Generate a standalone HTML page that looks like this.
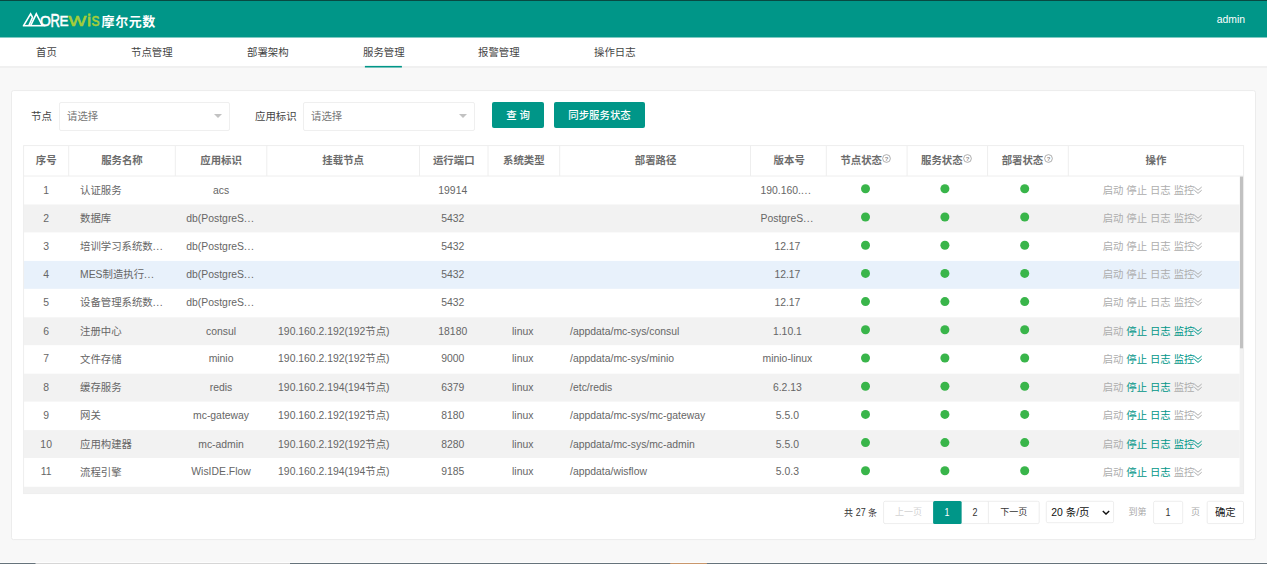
<!DOCTYPE html>
<html lang="zh-CN">
<head>
<meta charset="utf-8">
<title>服务管理</title>
<style>
*{box-sizing:border-box;margin:0;padding:0}
html,body{width:1267px;height:564px;overflow:hidden;background:#f8f8f8}
body{font-family:"Liberation Sans","Noto Sans CJK SC",sans-serif;font-size:10.4px;color:#555;position:relative}
.abs{position:absolute}
.bg{position:absolute;left:0;top:0}
#logo{left:22px;top:10px;overflow:visible}
#user{right:22px;top:13px;color:#fff;font-size:10.4px;line-height:14px}
#nav{left:0;top:37px;width:1267px;height:30px}
#nav span{position:absolute;top:1px;line-height:30px;font-size:10.4px;color:#444;white-space:nowrap}
.lbl{font-size:10.4px;color:#444;line-height:28px;top:103px;white-space:nowrap}
.sel{top:102px;height:29px;width:171px;border:1px solid #efefef;border-radius:2px;background:#fff;font-size:10.4px;color:#777;line-height:28px;padding-left:7px}
.sel:after{content:"";position:absolute;right:7px;top:11px;border:4px solid transparent;border-top:4px solid #c2c2c2}
.btn{top:102px;height:26px;background:#009688;color:#fff;font-size:10.4px;font-weight:500;line-height:27.5px;text-align:center;border-radius:2px}
.th{position:absolute;top:147px;height:28px;line-height:28px;font-weight:bold;color:#6c6c6c;text-align:center;white-space:nowrap}
.td{position:absolute;height:28px;line-height:28px;text-align:center;white-space:nowrap;color:#666}
.td.l{text-align:left}
.el{letter-spacing:0.58px}
.g{color:#adadad}
.t{color:#009688}
.q{vertical-align:middle;position:relative;top:-3px;margin-right:1.6px;margin-left:0.4px}
.cv{vertical-align:middle;position:relative;top:-0.8px;margin-left:-0.4px}
.pb{position:absolute;top:501px;height:23px;text-align:center;line-height:23px;font-size:9px;color:#333;white-space:nowrap}
.pb b,.pt b{font-weight:normal;font-size:10.4px;display:inline-block;transform:scaleX(0.86);margin:0 -0.8px}
.pb.psel{font-size:10.4px;color:#111;text-align:left;padding-left:5px}
.pb.psel svg{position:absolute;right:4px;top:9px}
.pt{top:501px;line-height:23px;font-size:9px;white-space:nowrap}
</style>
</head>
<body>
<svg class="bg" width="1267" height="564" viewBox="0 0 1267 564">
<rect x="0" y="0" width="1267" height="37.7" fill="#009688"/>
<rect x="0" y="0" width="1267" height="0.75" fill="#0b2f2b"/>
<rect x="0" y="37.7" width="1267" height="29" fill="#fff"/>
<rect x="0" y="66.5" width="1267" height="0.9" fill="#e4e4e4"/>
<rect x="364.9" y="65.9" width="37" height="1.6" fill="#009688"/>
<rect x="0" y="562" width="1267" height="1" fill="#fdfdfd"/>
<rect x="0" y="563" width="1267" height="1" fill="#66737b"/>
<rect x="35.5" y="563" width="254.5" height="1" fill="#d6d6d6"/>
<rect x="670.2" y="563" width="36.7" height="1" fill="#c9976c"/>
<rect x="11.5" y="90.6" width="1244" height="449" rx="2" fill="#fff" stroke="#ececec" stroke-width="1"/>
<rect x="24" y="204.50" width="1215.6" height="27.9" fill="#f2f2f2"/>
<rect x="24" y="260.90" width="1215.6" height="27.9" fill="#e8f1fb"/>
<rect x="24" y="317.30" width="1215.6" height="27.9" fill="#f2f2f2"/>
<rect x="24" y="373.70" width="1215.6" height="27.9" fill="#f2f2f2"/>
<rect x="24" y="430.10" width="1215.6" height="27.9" fill="#f2f2f2"/>
<circle cx="865.5" cy="188.80" r="4.5" fill="#39b54a"/>
<circle cx="944.9" cy="188.80" r="4.5" fill="#39b54a"/>
<circle cx="1024.7" cy="188.80" r="4.5" fill="#39b54a"/>
<circle cx="865.5" cy="217.00" r="4.5" fill="#39b54a"/>
<circle cx="944.9" cy="217.00" r="4.5" fill="#39b54a"/>
<circle cx="1024.7" cy="217.00" r="4.5" fill="#39b54a"/>
<circle cx="865.5" cy="245.20" r="4.5" fill="#39b54a"/>
<circle cx="944.9" cy="245.20" r="4.5" fill="#39b54a"/>
<circle cx="1024.7" cy="245.20" r="4.5" fill="#39b54a"/>
<circle cx="865.5" cy="273.40" r="4.5" fill="#39b54a"/>
<circle cx="944.9" cy="273.40" r="4.5" fill="#39b54a"/>
<circle cx="1024.7" cy="273.40" r="4.5" fill="#39b54a"/>
<circle cx="865.5" cy="301.60" r="4.5" fill="#39b54a"/>
<circle cx="944.9" cy="301.60" r="4.5" fill="#39b54a"/>
<circle cx="1024.7" cy="301.60" r="4.5" fill="#39b54a"/>
<circle cx="865.5" cy="329.80" r="4.5" fill="#39b54a"/>
<circle cx="944.9" cy="329.80" r="4.5" fill="#39b54a"/>
<circle cx="1024.7" cy="329.80" r="4.5" fill="#39b54a"/>
<circle cx="865.5" cy="358.00" r="4.5" fill="#39b54a"/>
<circle cx="944.9" cy="358.00" r="4.5" fill="#39b54a"/>
<circle cx="1024.7" cy="358.00" r="4.5" fill="#39b54a"/>
<circle cx="865.5" cy="386.20" r="4.5" fill="#39b54a"/>
<circle cx="944.9" cy="386.20" r="4.5" fill="#39b54a"/>
<circle cx="1024.7" cy="386.20" r="4.5" fill="#39b54a"/>
<circle cx="865.5" cy="414.40" r="4.5" fill="#39b54a"/>
<circle cx="944.9" cy="414.40" r="4.5" fill="#39b54a"/>
<circle cx="1024.7" cy="414.40" r="4.5" fill="#39b54a"/>
<circle cx="865.5" cy="442.60" r="4.5" fill="#39b54a"/>
<circle cx="944.9" cy="442.60" r="4.5" fill="#39b54a"/>
<circle cx="1024.7" cy="442.60" r="4.5" fill="#39b54a"/>
<circle cx="865.5" cy="470.80" r="4.5" fill="#39b54a"/>
<circle cx="944.9" cy="470.80" r="4.5" fill="#39b54a"/>
<circle cx="1024.7" cy="470.80" r="4.5" fill="#39b54a"/>
<rect x="1239.6" y="176.3" width="4" height="317.2" fill="#f1f1f1"/>
<rect x="1240" y="176.3" width="3.6" height="172" fill="#c1c1c1"/>
<rect x="24" y="486.8" width="1219.6" height="6.7" fill="#f1f1f1"/>
<g stroke="#e9e9e9" stroke-width="0.8" fill="#fff">
<rect x="883.6" y="501.3" width="155.6" height="22.3" rx="1.5"/>
<path d="M961.4 501.3 V523.6 M988.4 501.3 V523.6" fill="none"/>
<rect x="1046.3" y="501.3" width="67.3" height="21.4" rx="1.5"/>
<rect x="1153.6" y="501.3" width="29.1" height="22.3" rx="1.5"/>
<rect x="1207.2" y="501.3" width="36.3" height="22.3" rx="1.5"/>
</g>
<rect x="933.1" y="500.9" width="28.5" height="23.1" rx="1.5" fill="#009688"/>
<g stroke="#eeeeee" stroke-width="1" fill="none">
<rect x="23.6" y="145.6" width="1220" height="348"/>
<path d="M23.6 176 H1243.6"/>
<path d="M68.7 145.6 V176"/>
<path d="M175.3 145.6 V176"/>
<path d="M266.8 145.6 V176"/>
<path d="M419.5 145.6 V176"/>
<path d="M488.0 145.6 V176"/>
<path d="M559.7 145.6 V176"/>
<path d="M750.5 145.6 V176"/>
<path d="M826.3 145.6 V176"/>
<path d="M907.1 145.6 V176"/>
<path d="M987.6 145.6 V176"/>
<path d="M1068.3 145.6 V176"/>
</g></svg>
<div id="user" class="abs">admin</div>
<div id="nav" class="abs">
<span style="left:36px">首页</span>
<span style="left:131px">节点管理</span>
<span style="left:247px">部署架构</span>
<span style="left:363px">服务管理</span>
<span style="left:478px">报警管理</span>
<span style="left:594px">操作日志</span>
</div>
<div class="abs lbl" style="left:31px">节点</div>
<div class="abs sel" style="left:59px">请选择</div>
<div class="abs lbl" style="left:255px">应用标识</div>
<div class="abs sel" style="left:303px;width:172px">请选择</div>
<div class="abs btn" style="left:492px;width:52px">查 询</div>
<div class="abs btn" style="left:554px;width:91px">同步服务状态</div>
<div class="th" style="left:23.60px;width:45.10px">序号</div>
<div class="th" style="left:68.70px;width:106.60px">服务名称</div>
<div class="th" style="left:175.30px;width:91.50px">应用标识</div>
<div class="th" style="left:266.80px;width:152.70px">挂载节点</div>
<div class="th" style="left:419.50px;width:68.50px">运行端口</div>
<div class="th" style="left:488.00px;width:71.70px">系统类型</div>
<div class="th" style="left:560.20px;width:190.80px">部署路径</div>
<div class="th" style="left:751.30px;width:75.80px">版本号</div>
<div class="th" style="left:826.30px;width:80.80px">节点状态<svg class="q" viewBox="0 0 10 10" width="9" height="9"><circle cx="5" cy="5" r="4.3" fill="none" stroke="#888" stroke-width="0.75"/><text x="5" y="7.4" font-size="6.6" text-anchor="middle" fill="#888" font-family="Liberation Sans, sans-serif">?</text></svg></div>
<div class="th" style="left:907.10px;width:80.50px">服务状态<svg class="q" viewBox="0 0 10 10" width="9" height="9"><circle cx="5" cy="5" r="4.3" fill="none" stroke="#888" stroke-width="0.75"/><text x="5" y="7.4" font-size="6.6" text-anchor="middle" fill="#888" font-family="Liberation Sans, sans-serif">?</text></svg></div>
<div class="th" style="left:987.60px;width:80.70px">部署状态<svg class="q" viewBox="0 0 10 10" width="9" height="9"><circle cx="5" cy="5" r="4.3" fill="none" stroke="#888" stroke-width="0.75"/><text x="5" y="7.4" font-size="6.6" text-anchor="middle" fill="#888" font-family="Liberation Sans, sans-serif">?</text></svg></div>
<div class="th" style="left:1068.30px;width:175.30px">操作</div>
<div class="td" style="left:23.60px;top:177px;width:45.10px">1</div>
<div class="td l" style="left:80.00px;top:177px;width:95.60px">认证服务</div>
<div class="td" style="left:175.30px;top:177px;width:91.50px">acs</div>
<div class="td" style="left:418.50px;top:177px;width:68.50px">19914</div>
<div class="td l" style="left:760.50px;top:177px;width:64.80px">190.160.<span class="el">...</span></div>
<div class="td op" style="left:1066.70px;top:177px;width:171.30px"><span class="g">启动</span> <span class="g">停止</span> <span class="g">日志</span> <span class="g">监控<svg class="cv" viewBox="0 0 8 8" width="8" height="8"><path d="M0.3 1 L4 4.2 L7.7 1 M0.3 4.2 L4 7.4 L7.7 4.2" fill="none" stroke="currentColor" stroke-width="1"/></svg></span></div>
<div class="td" style="left:23.60px;top:205px;width:45.10px">2</div>
<div class="td l" style="left:80.00px;top:205px;width:95.60px">数据库</div>
<div class="td l" style="left:186.30px;top:205px;width:80.50px">db(PostgreS<span class="el">...</span></div>
<div class="td" style="left:418.50px;top:205px;width:68.50px">5432</div>
<div class="td l" style="left:760.50px;top:205px;width:64.80px">PostgreS<span class="el">...</span></div>
<div class="td op" style="left:1066.70px;top:205px;width:171.30px"><span class="g">启动</span> <span class="g">停止</span> <span class="g">日志</span> <span class="g">监控<svg class="cv" viewBox="0 0 8 8" width="8" height="8"><path d="M0.3 1 L4 4.2 L7.7 1 M0.3 4.2 L4 7.4 L7.7 4.2" fill="none" stroke="currentColor" stroke-width="1"/></svg></span></div>
<div class="td" style="left:23.60px;top:233px;width:45.10px">3</div>
<div class="td l" style="left:80.00px;top:233px;width:95.60px">培训学习系统数<span class="el">...</span></div>
<div class="td l" style="left:186.30px;top:233px;width:80.50px">db(PostgreS<span class="el">...</span></div>
<div class="td" style="left:418.50px;top:233px;width:68.50px">5432</div>
<div class="td" style="left:749.50px;top:233px;width:75.80px">12.17</div>
<div class="td op" style="left:1066.70px;top:233px;width:171.30px"><span class="g">启动</span> <span class="g">停止</span> <span class="g">日志</span> <span class="g">监控<svg class="cv" viewBox="0 0 8 8" width="8" height="8"><path d="M0.3 1 L4 4.2 L7.7 1 M0.3 4.2 L4 7.4 L7.7 4.2" fill="none" stroke="currentColor" stroke-width="1"/></svg></span></div>
<div class="td" style="left:23.60px;top:261px;width:45.10px">4</div>
<div class="td l" style="left:80.00px;top:261px;width:95.60px">MES制造执行<span class="el">...</span></div>
<div class="td l" style="left:186.30px;top:261px;width:80.50px">db(PostgreS<span class="el">...</span></div>
<div class="td" style="left:418.50px;top:261px;width:68.50px">5432</div>
<div class="td" style="left:749.50px;top:261px;width:75.80px">12.17</div>
<div class="td op" style="left:1066.70px;top:261px;width:171.30px"><span class="g">启动</span> <span class="g">停止</span> <span class="g">日志</span> <span class="g">监控<svg class="cv" viewBox="0 0 8 8" width="8" height="8"><path d="M0.3 1 L4 4.2 L7.7 1 M0.3 4.2 L4 7.4 L7.7 4.2" fill="none" stroke="currentColor" stroke-width="1"/></svg></span></div>
<div class="td" style="left:23.60px;top:289px;width:45.10px">5</div>
<div class="td l" style="left:80.00px;top:289px;width:95.60px">设备管理系统数<span class="el">...</span></div>
<div class="td l" style="left:186.30px;top:289px;width:80.50px">db(PostgreS<span class="el">...</span></div>
<div class="td" style="left:418.50px;top:289px;width:68.50px">5432</div>
<div class="td" style="left:749.50px;top:289px;width:75.80px">12.17</div>
<div class="td op" style="left:1066.70px;top:289px;width:171.30px"><span class="g">启动</span> <span class="g">停止</span> <span class="g">日志</span> <span class="g">监控<svg class="cv" viewBox="0 0 8 8" width="8" height="8"><path d="M0.3 1 L4 4.2 L7.7 1 M0.3 4.2 L4 7.4 L7.7 4.2" fill="none" stroke="currentColor" stroke-width="1"/></svg></span></div>
<div class="td" style="left:23.60px;top:318px;width:45.10px">6</div>
<div class="td l" style="left:80.00px;top:318px;width:95.60px">注册中心</div>
<div class="td" style="left:175.30px;top:318px;width:91.50px">consul</div>
<div class="td l" style="left:278.10px;top:318px;width:141.70px">190.160.2.192(192节点)</div>
<div class="td" style="left:418.50px;top:318px;width:68.50px">18180</div>
<div class="td" style="left:486.90px;top:318px;width:71.70px">linux</div>
<div class="td l" style="left:570.10px;top:318px;width:179.80px">/appdata/mc-sys/consul</div>
<div class="td" style="left:749.50px;top:318px;width:75.80px">1.10.1</div>
<div class="td op" style="left:1066.70px;top:318px;width:171.30px"><span class="g">启动</span> <span class="t">停止</span> <span class="t">日志</span> <span class="t">监控<svg class="cv" viewBox="0 0 8 8" width="8" height="8"><path d="M0.3 1 L4 4.2 L7.7 1 M0.3 4.2 L4 7.4 L7.7 4.2" fill="none" stroke="currentColor" stroke-width="1"/></svg></span></div>
<div class="td" style="left:23.60px;top:345px;width:45.10px">7</div>
<div class="td l" style="left:80.00px;top:346px;width:95.60px">文件存储</div>
<div class="td" style="left:175.30px;top:345px;width:91.50px">minio</div>
<div class="td l" style="left:278.10px;top:345px;width:141.70px">190.160.2.192(192节点)</div>
<div class="td" style="left:418.50px;top:345px;width:68.50px">9000</div>
<div class="td" style="left:486.90px;top:345px;width:71.70px">linux</div>
<div class="td l" style="left:570.10px;top:345px;width:179.80px">/appdata/mc-sys/minio</div>
<div class="td" style="left:749.50px;top:345px;width:75.80px">minio-linux</div>
<div class="td op" style="left:1066.70px;top:346px;width:171.30px"><span class="g">启动</span> <span class="t">停止</span> <span class="t">日志</span> <span class="t">监控<svg class="cv" viewBox="0 0 8 8" width="8" height="8"><path d="M0.3 1 L4 4.2 L7.7 1 M0.3 4.2 L4 7.4 L7.7 4.2" fill="none" stroke="currentColor" stroke-width="1"/></svg></span></div>
<div class="td" style="left:23.60px;top:374px;width:45.10px">8</div>
<div class="td l" style="left:80.00px;top:374px;width:95.60px">缓存服务</div>
<div class="td" style="left:175.30px;top:374px;width:91.50px">redis</div>
<div class="td l" style="left:278.10px;top:374px;width:141.70px">190.160.2.194(194节点)</div>
<div class="td" style="left:418.50px;top:374px;width:68.50px">6379</div>
<div class="td" style="left:486.90px;top:374px;width:71.70px">linux</div>
<div class="td l" style="left:570.10px;top:374px;width:179.80px">/etc/redis</div>
<div class="td" style="left:749.50px;top:374px;width:75.80px">6.2.13</div>
<div class="td op" style="left:1066.70px;top:374px;width:171.30px"><span class="g">启动</span> <span class="t">停止</span> <span class="t">日志</span> <span class="g">监控<svg class="cv" viewBox="0 0 8 8" width="8" height="8"><path d="M0.3 1 L4 4.2 L7.7 1 M0.3 4.2 L4 7.4 L7.7 4.2" fill="none" stroke="currentColor" stroke-width="1"/></svg></span></div>
<div class="td" style="left:23.60px;top:402px;width:45.10px">9</div>
<div class="td l" style="left:80.00px;top:402px;width:95.60px">网关</div>
<div class="td" style="left:175.30px;top:402px;width:91.50px">mc-gateway</div>
<div class="td l" style="left:278.10px;top:402px;width:141.70px">190.160.2.192(192节点)</div>
<div class="td" style="left:418.50px;top:402px;width:68.50px">8180</div>
<div class="td" style="left:486.90px;top:402px;width:71.70px">linux</div>
<div class="td l" style="left:570.10px;top:402px;width:179.80px">/appdata/mc-sys/mc-gateway</div>
<div class="td" style="left:749.50px;top:402px;width:75.80px">5.5.0</div>
<div class="td op" style="left:1066.70px;top:402px;width:171.30px"><span class="g">启动</span> <span class="t">停止</span> <span class="t">日志</span> <span class="g">监控<svg class="cv" viewBox="0 0 8 8" width="8" height="8"><path d="M0.3 1 L4 4.2 L7.7 1 M0.3 4.2 L4 7.4 L7.7 4.2" fill="none" stroke="currentColor" stroke-width="1"/></svg></span></div>
<div class="td" style="left:23.60px;top:431px;width:45.10px">10</div>
<div class="td l" style="left:80.00px;top:431px;width:95.60px">应用构建器</div>
<div class="td" style="left:175.30px;top:431px;width:91.50px">mc-admin</div>
<div class="td l" style="left:278.10px;top:431px;width:141.70px">190.160.2.192(192节点)</div>
<div class="td" style="left:418.50px;top:431px;width:68.50px">8280</div>
<div class="td" style="left:486.90px;top:431px;width:71.70px">linux</div>
<div class="td l" style="left:570.10px;top:431px;width:179.80px">/appdata/mc-sys/mc-admin</div>
<div class="td" style="left:749.50px;top:431px;width:75.80px">5.5.0</div>
<div class="td op" style="left:1066.70px;top:431px;width:171.30px"><span class="g">启动</span> <span class="t">停止</span> <span class="t">日志</span> <span class="t">监控<svg class="cv" viewBox="0 0 8 8" width="8" height="8"><path d="M0.3 1 L4 4.2 L7.7 1 M0.3 4.2 L4 7.4 L7.7 4.2" fill="none" stroke="currentColor" stroke-width="1"/></svg></span></div>
<div class="td" style="left:23.60px;top:458px;width:45.10px">11</div>
<div class="td l" style="left:80.00px;top:459px;width:95.60px">流程引擎</div>
<div class="td" style="left:175.30px;top:458px;width:91.50px">WisIDE.Flow</div>
<div class="td l" style="left:278.10px;top:458px;width:141.70px">190.160.2.194(194节点)</div>
<div class="td" style="left:418.50px;top:458px;width:68.50px">9185</div>
<div class="td" style="left:486.90px;top:458px;width:71.70px">linux</div>
<div class="td l" style="left:570.10px;top:458px;width:179.80px">/appdata/wisflow</div>
<div class="td" style="left:749.50px;top:458px;width:75.80px">5.0.3</div>
<div class="td op" style="left:1066.70px;top:459px;width:171.30px"><span class="g">启动</span> <span class="t">停止</span> <span class="t">日志</span> <span class="g">监控<svg class="cv" viewBox="0 0 8 8" width="8" height="8"><path d="M0.3 1 L4 4.2 L7.7 1 M0.3 4.2 L4 7.4 L7.7 4.2" fill="none" stroke="currentColor" stroke-width="1"/></svg></span></div>

<div class="abs pt" style="left:844px;color:#333">共 <b>27</b> 条</div>
<div class="pb" style="left:883.6px;width:49.7px;color:#d2d2d2">上一页</div>
<div class="pb" style="left:933.3px;width:28.1px;color:#fff"><b>1</b></div>
<div class="pb" style="left:961.4px;width:27px"><b>2</b></div>
<div class="pb" style="left:988.4px;width:50.8px">下一页</div>
<div class="pb psel" style="left:1046.3px;width:67.3px">20 条/页<svg viewBox="0 0 10 6" width="8" height="5"><path d="M1 1 L5 5 L9 1" fill="none" stroke="#111" stroke-width="1.7"/></svg></div>
<div class="abs pt" style="left:1128.5px;color:#aaa">到第</div>
<div class="pb" style="left:1153.6px;width:29.1px"><b>1</b></div>
<div class="abs pt" style="left:1191px;color:#aaa">页</div>
<div class="pb" style="left:1207.2px;width:36.3px;font-size:10.4px;color:#222">确定</div>
<svg id="logo" class="abs" width="140" height="24" viewBox="22 10 140 24">
<g fill="none" stroke="#fff" stroke-width="1.6" stroke-linejoin="miter">
<path d="M22.8 25.7 L45.5 25.7"/>
<path d="M23.6 25.7 L30.6 13.8 L32.5 17.3 L28.8 25.7"/>
<path d="M30.6 25.7 L36.3 13.8 L42.3 25.5"/>
</g>
<g font-family="Liberation Sans, sans-serif" stroke-width="0.55">
<text x="40.1" y="26.4" font-size="14.6" fill="#fff" stroke="#fff" textLength="10.8" lengthAdjust="spacingAndGlyphs">O</text>
<text x="50.5" y="27" font-size="18.6" fill="#fff" stroke="#fff" textLength="9.4" lengthAdjust="spacingAndGlyphs">R</text>
<text x="59.6" y="26.4" font-size="14.6" fill="#fff" stroke="#fff" textLength="9" lengthAdjust="spacingAndGlyphs">E</text>
<text x="68.6" y="26.4" font-size="14.6" fill="#a6ce39" stroke="#a6ce39" textLength="17.8" lengthAdjust="spacingAndGlyphs">W</text>
<text x="87.3" y="26.4" font-size="16.5" fill="#a6ce39" stroke="#a6ce39" stroke-width="0.8">i</text>
<text x="91.4" y="26.4" font-size="14.6" fill="#a6ce39" stroke="#a6ce39" stroke-width="0.7" textLength="8" lengthAdjust="spacingAndGlyphs">S</text>
</g>
<text transform="translate(101.6 25.6) scale(1 0.98)" font-size="13" font-weight="bold" fill="#fff" font-family="Noto Sans CJK SC, sans-serif" letter-spacing="0.55">摩尔元数</text>
</svg>
</body>
</html>
